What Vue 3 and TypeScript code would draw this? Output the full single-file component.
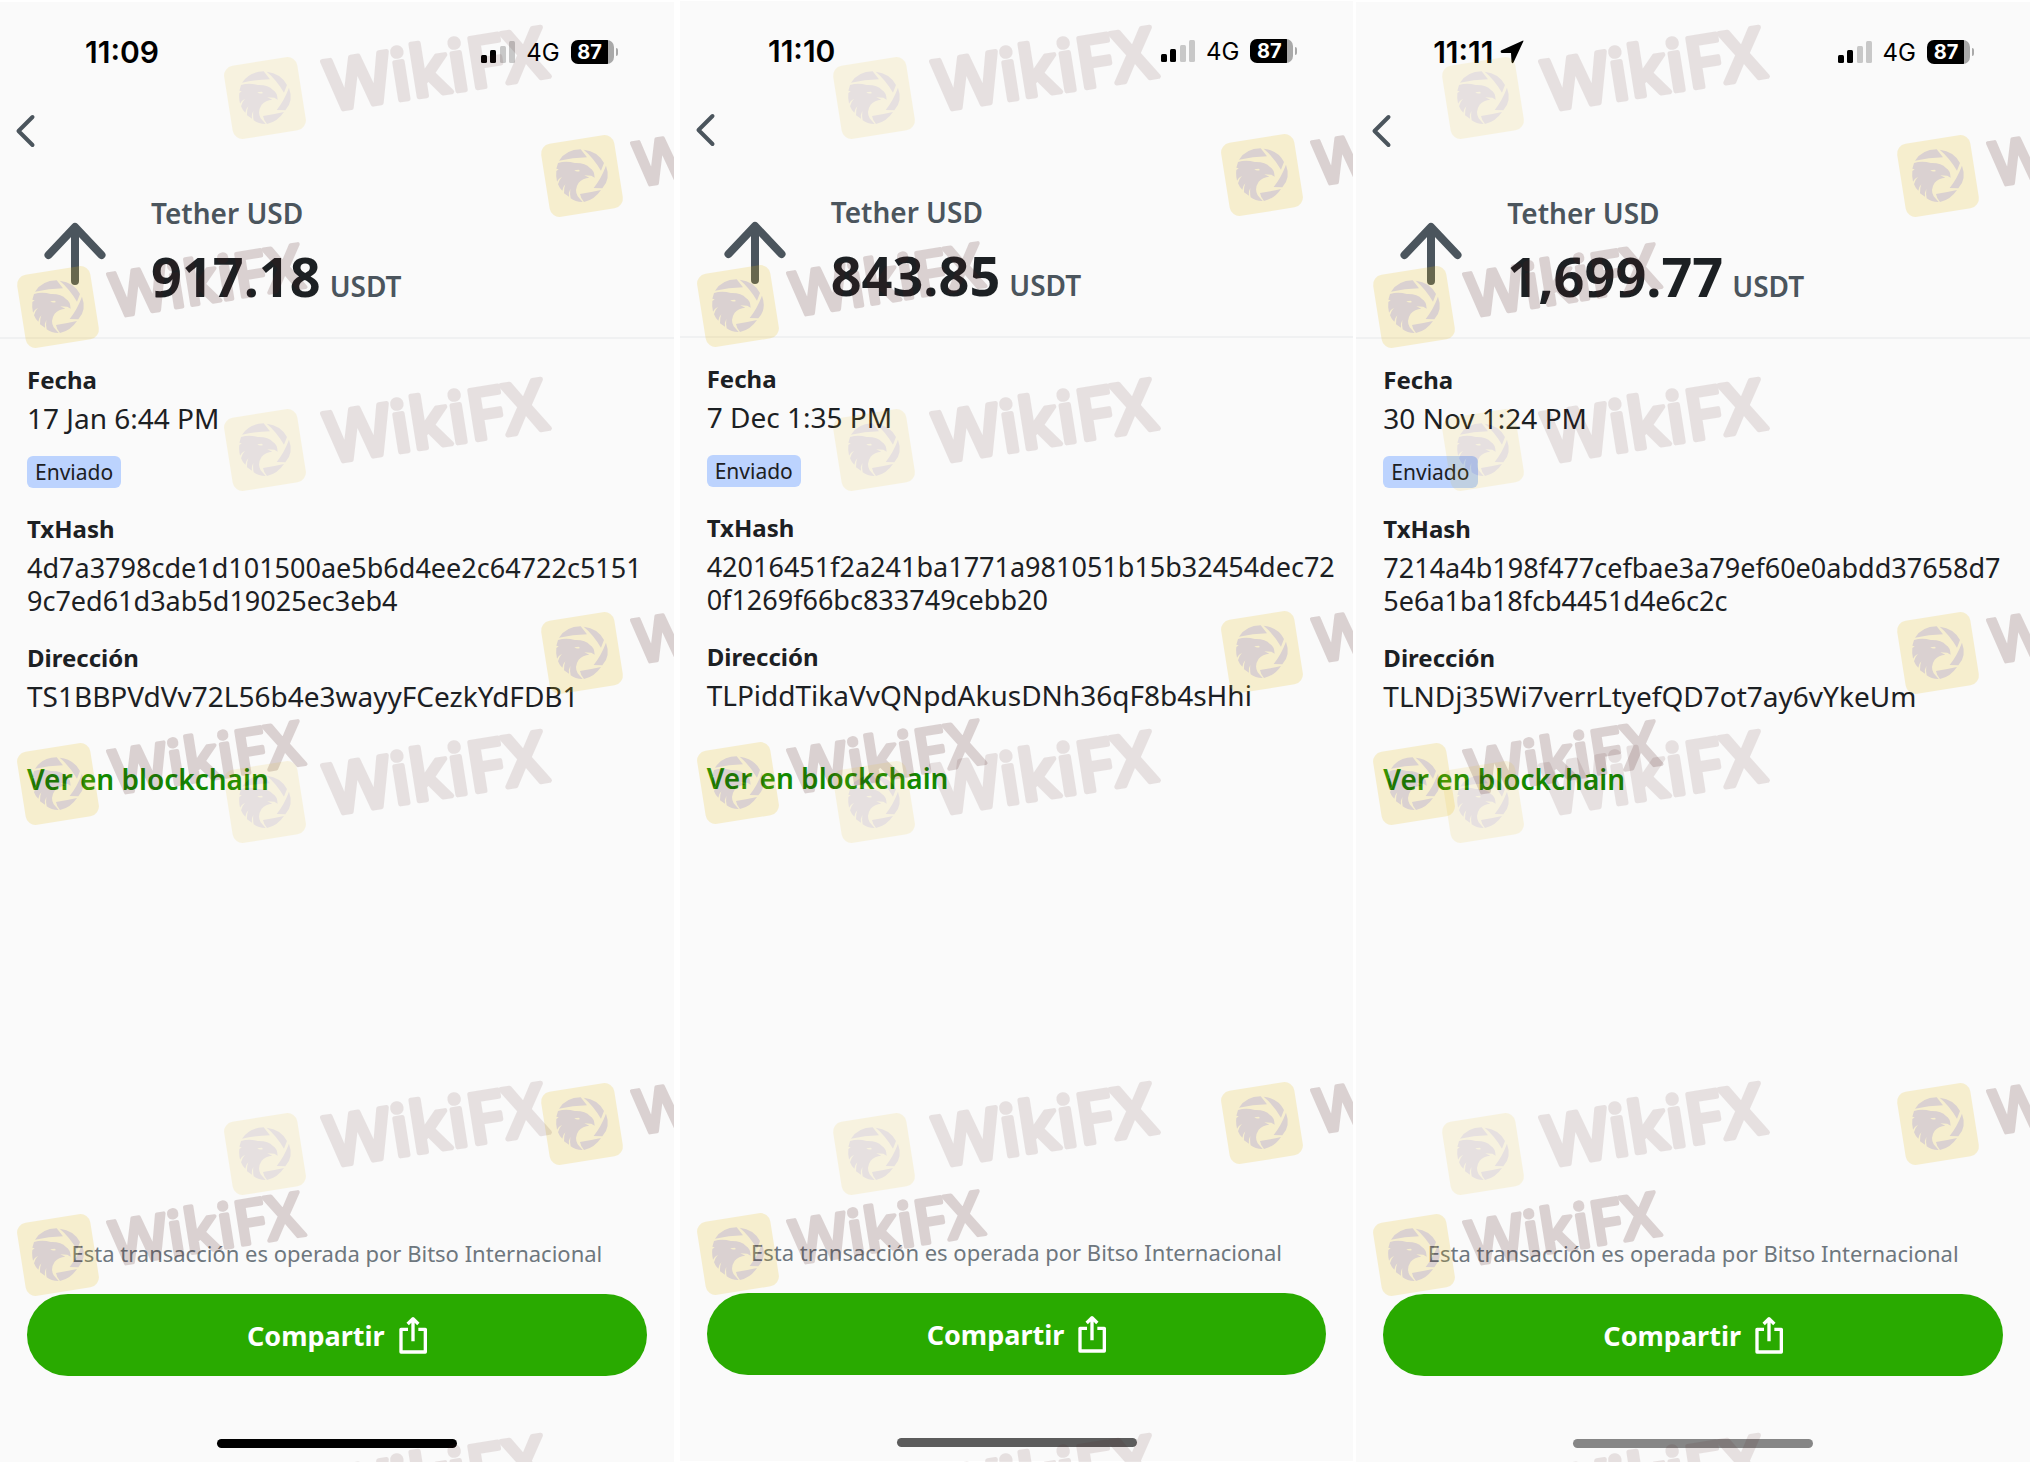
<script setup lang="ts">
interface Receipt {
  time: string
  located: boolean
  amount: string
  date: string
  hash: [string, string]
  address: string
  bar: string
}

interface Point {
  x: number
  y: number
}

const receipts: Receipt[] = [
  {
    time: '11:09',
    located: false,
    amount: '917.18',
    date: '17 Jan 6:44 PM',
    hash: ['4d7a3798cde1d101500ae5b6d4ee2c64722c5151', '9c7ed61d3ab5d19025ec3eb4'],
    address: 'TS1BBPVdVv72L56b4e3wayyFCezkYdFDB1',
    bar: 'bar-solid',
  },
  {
    time: '11:10',
    located: false,
    amount: '843.85',
    date: '7 Dec 1:35 PM',
    hash: ['42016451f2a241ba1771a981051b15b32454dec72', '0f1269f66bc833749cebb20'],
    address: 'TLPiddTikaVvQNpdAkusDNh36qF8b4sHhi',
    bar: 'bar-mid',
  },
  {
    time: '11:11',
    located: true,
    amount: '1,699.77',
    date: '30 Nov 1:24 PM',
    hash: ['7214a4b198f477cefbae3a79ef60e0abdd37658d7', '5e6a1ba18fcb4451d4e6c2c'],
    address: 'TLNDj35Wi7verrLtyefQD7ot7ay6vYkeUm',
    bar: 'bar-soft',
  },
]

const screenMarks: Point[] = [0, 477, 948].flatMap((dy) => [
  { x: 58, y: 305 + dy },
  { x: 582, y: 174 + dy },
])

const pageMarks: Point[] = [98, 450, 802, 1154, 1506].flatMap((y) =>
  [0, 1, 2].map((col) => ({ x: 265 + col * 609, y })),
)
</script>

<template>
  <main class="page">
    <svg class="defs" width="0" height="0" aria-hidden="true">
      <defs>
        <g id="logo">
          <rect x="-37" y="-37" width="74" height="74" rx="10" fill="#e6ba0c" transform="rotate(-9)" />
          <g transform="scale(0.333) translate(-156 -167)" fill="#4e1c1c">
            <path d="M87 121 Q108 88 152 87 L171 111 Q128 112 87 121 Z" />
            <path d="M161 88 Q204 93 222 128 L213 151 Q190 112 161 88 Z" />
            <path d="M228 136 Q243 176 217 204 L191 203 Q214 174 228 136 Z" />
            <path d="M150 221 Q182 216 213 209 Q194 238 162 245 Q152 234 150 221 Z" />
            <path
              fill-rule="evenodd"
              d="M84 128 Q108 121 134 128 Q166 127 180 143 Q193 150 194 172 L184 166 L163 165 L178 172 Q158 174 146 187 Q132 208 143 228 L158 245 Q135 245 122 234 Q119 220 121 206 Q115 216 117 229 L102 219 Q101 204 106 192 Q98 200 97 211 Q88 203 84 192 Q88 177 96 169 Q86 174 81 184 Q77 168 79 152 L86 147 L79 145 Z M133 150 Q140 156 150 152 L146 148 Z"
            />
          </g>
        </g>
      </defs>
    </svg>

    <section v-for="r in receipts" :key="r.time" class="screen">
      <header class="status">
        <div class="clock">
          <span>{{ r.time }}</span>
          <svg v-if="r.located" width="24" height="24" viewBox="0 0 24 24" aria-hidden="true">
            <path d="M23.500 1 Q23.500 0 22 1 L1 10.500 Q0 12.500 2 13 L11 13 L11.500 22 Q12 24 13.500 22.500 Z" />
          </svg>
        </div>
        <div class="signal">
          <svg width="34" height="22" viewBox="0 0 34 22" aria-hidden="true">
            <rect x="0" y="14" width="6" height="8" rx="1.500" />
            <rect x="9" y="9" width="6" height="13" rx="1.500" />
            <rect x="19" y="5" width="6" height="17" rx="1.500" fill="#c8c8c8" />
            <rect x="28" y="0" width="6" height="22" rx="1.500" fill="#c8c8c8" />
          </svg>
          <span class="network">4G</span>
          <div class="battery">
            <span class="level">87</span>
            <i class="nub"></i>
          </div>
        </div>
      </header>

      <nav class="nav">
        <button class="back" type="button" aria-label="Atrás">
          <svg width="22" height="36" viewBox="0 0 22 36" aria-hidden="true">
            <path d="M18.500 4 L4.500 18 L18.500 32" fill="none" stroke="#4b555d" stroke-width="4" stroke-linecap="round" stroke-linejoin="round" />
          </svg>
        </button>
      </nav>

      <div class="summary">
        <svg class="up" width="62" height="64" viewBox="0 0 62 64" aria-hidden="true">
          <path d="M4.500 33 L31 5 L57.500 33 M31 7 V59" fill="none" stroke="#4b555d" stroke-width="8" stroke-linecap="round" stroke-linejoin="round" />
        </svg>
        <div>
          <p class="asset">Tether USD</p>
          <p class="amount">
            <strong>{{ r.amount }}</strong>
            <span class="unit">USDT</span>
          </p>
        </div>
      </div>

      <dl class="details">
        <div class="group">
          <dt>Fecha</dt>
          <dd>{{ r.date }}</dd>
          <dd class="badge">Enviado</dd>
        </div>
        <div class="group">
          <dt>TxHash</dt>
          <dd class="hash">{{ r.hash[0] }}<br />{{ r.hash[1] }}</dd>
        </div>
        <div class="group">
          <dt>Dirección</dt>
          <dd>{{ r.address }}</dd>
        </div>
      </dl>
      <a class="explorer" href="#">Ver en blockchain</a>

      <footer class="foot">
        <p class="note">Esta transacción es operada por Bitso Internacional</p>
        <button class="share" type="button">
          <span>Compartir</span>
          <svg width="28" height="38" viewBox="0 0 84 114" aria-hidden="true">
            <path d="M27 40 H6 V108 H79 V40 H58 M42 76 V10 M26 24 L42 8 L58 24" fill="none" stroke="#fff" stroke-width="10" stroke-linejoin="round" />
          </svg>
        </button>
        <div class="bar" :class="r.bar"></div>
      </footer>

      <svg class="marks" aria-hidden="true">
        <g v-for="(m, i) in screenMarks" :key="i" opacity="0.18" :transform="`translate(${m.x} ${m.y})`">
          <use href="#logo" />
          <text class="mark-text mark-small" x="54" y="19" transform="rotate(-9)">WikiFX</text>
        </g>
      </svg>
    </section>

    <svg class="marks" aria-hidden="true">
      <g v-for="(m, i) in pageMarks" :key="i" opacity="0.11" :transform="`translate(${m.x} ${m.y})`">
        <use href="#logo" />
        <text class="mark-text" x="62" y="23" transform="rotate(-9)">WikiFX</text>
      </g>
    </svg>
  </main>
</template>

<style>
body {
  margin: 0;
  background: #fff;
}
</style>

<style scoped>
.page {
  position: relative;
  display: flex;
  min-height: 100vh;
  overflow: hidden;
  font-family: 'Noto Sans', sans-serif;
  color: #1c2023;
}

.defs {
  position: absolute;
}

.mark-text {
  font-family: 'Noto Sans', sans-serif;
  font-size: 70px;
  font-weight: 500;
  fill: #4e1c1c;
  stroke: #4e1c1c;
  stroke-width: 5px;
  stroke-linecap: round;
  stroke-linejoin: round;
}

.mark-small {
  font-size: 61px;
  stroke-width: 4px;
}

.marks {
  position: absolute;
  inset: 0;
  width: 100%;
  height: 100%;
  pointer-events: none;
}

.screen {
  position: relative;
  display: flex;
  flex: 1 1 0;
  flex-direction: column;
  min-width: 0;
  margin-top: 2px;
  background: #fafafa;
}

.screen:nth-of-type(2) {
  margin: 1px 3px 1px 6px;
}

.status {
  display: flex;
  align-items: center;
  justify-content: space-between;
  height: 100px;
  padding-right: 56px;
  font-family: Inter, sans-serif;
  color: #000;
}

.clock {
  display: flex;
  align-items: center;
  justify-content: center;
  gap: 6px;
  width: 244px;
  font-size: 30px;
  font-weight: 600;
}

.signal {
  display: flex;
  align-items: center;
}

.network {
  margin: 0 11px;
  font-size: 24px;
}

.battery {
  display: flex;
  align-items: center;
  gap: 2px;
}

.level {
  box-sizing: border-box;
  width: 43px;
  height: 24px;
  padding-right: 5px;
  border-radius: 7px;
  background: linear-gradient(to right, #000 37px, #a9a9a9 37px);
  color: #fff;
  font-size: 20px;
  font-weight: 700;
  line-height: 24px;
  text-align: center;
}

.nub {
  width: 2px;
  height: 8px;
  border-radius: 0 2px 2px 0;
  background: #a9a9a9;
}

.nav {
  display: flex;
  height: 58px;
  padding-left: 14px;
}

.back {
  display: flex;
  align-items: center;
  height: 58px;
  padding: 0;
  border: 0;
  background: none;
}

.summary {
  display: flex;
  gap: 45px;
  padding: 35px 0 19px 44px;
  border-bottom: 2px solid #f0f1f2;
}

.up {
  margin-top: 27px;
}

.asset {
  margin: 0;
  color: #4b555d;
  font-size: 28px;
  font-weight: 600;
  line-height: 36px;
}

.amount {
  display: flex;
  align-items: baseline;
  gap: 9px;
  margin: 13px 0 0;
  line-height: 64px;
}

.amount strong {
  font-size: 54px;
  font-weight: 700;
}

.unit {
  color: #4b555d;
  font-size: 28px;
  font-weight: 600;
}

.details {
  display: flex;
  flex-direction: column;
  gap: 25px;
  margin: 0;
  padding: 25px 0 0 27px;
}

.group {
  display: flex;
  flex-direction: column;
  align-items: flex-start;
}

dt {
  font-size: 24px;
  font-weight: 700;
  line-height: 32px;
}

dd {
  margin: 6px 0 0;
  font-size: 28px;
  line-height: 33px;
  white-space: nowrap;
}

.hash {
  font-size: 27px;
}

.badge {
  margin-top: 21px;
  padding: 0 8px;
  border-radius: 6px;
  background: #bcd3fe;
  font-size: 21px;
  line-height: 32px;
}

.explorer {
  align-self: flex-start;
  margin: 48px 0 0 27px;
  color: #128a00;
  font-size: 28px;
  font-weight: 600;
  line-height: 36px;
  text-decoration: none;
}

.foot {
  display: flex;
  flex-direction: column;
  align-items: center;
  margin-top: auto;
  padding: 0 27px 14px;
}

.note {
  margin: 0 0 26px;
  color: #6e777e;
  font-size: 22px;
  line-height: 30px;
}

.share {
  display: flex;
  align-items: center;
  justify-content: center;
  gap: 14px;
  width: 100%;
  height: 82px;
  padding: 0;
  border: 0;
  border-radius: 41px;
  background: #29aa00;
  color: #fff;
  font-family: inherit;
  font-size: 27px;
  font-weight: 700;
}

.bar {
  width: 240px;
  height: 9px;
  margin-top: 63px;
  border-radius: 5px;
}

.bar-solid {
  background: #000;
}

.bar-mid {
  background: #5c5c5c;
}

.bar-soft {
  background: #868686;
}
</style>
